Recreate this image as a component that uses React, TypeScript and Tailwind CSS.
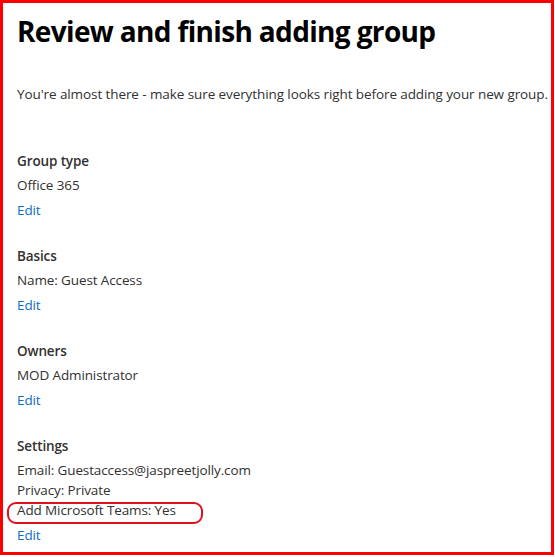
export default function App() {
  const sections = [
    { title: 'Group type', lines: ['Office 365'] },
    { title: 'Basics', lines: ['Name: Guest Access'] },
    { title: 'Owners', lines: ['MOD Administrator'] },
    {
      title: 'Settings',
      lines: ['Email: Guestaccess@jaspreetjolly.com', 'Privacy: Private', 'Add Microsoft Teams: Yes'],
    },
  ];

  return (
    <div className="w-[554px] h-[555px] border-[3px] border-[#ff0000] bg-white pl-[14px] pt-[10px] font-['Open_Sans',sans-serif] text-[#323130]">
      <h1 className="text-[28px] leading-[36px] font-bold text-black tracking-[-0.65px]">
        Review and finish adding group
      </h1>
      <p className="mt-[35px] text-[13.5px] leading-[20px] tracking-[-0.09px] text-[#323130] whitespace-nowrap">
        You're almost there - make sure everything looks right before adding your new group.
      </p>

      <div className="mt-[47px] flex flex-col gap-[26px]">
        {sections.map((s) => (
          <div key={s.title} className="flex flex-col text-[13.5px] leading-[20px] tracking-[-0.12px]">
            <div className="font-semibold">{s.title}</div>
            <div className="mt-[4px] flex flex-col">
              {s.lines.map((line) => (
                <div key={line} className="relative">
                  {line}
                  {line.startsWith('Add Microsoft') && (
                    <div className="absolute left-[-10px] top-[2px] w-[196px] h-[22px] rounded-[9px] border-[2.5px] border-[#e0101e]" />
                  )}
                </div>
              ))}
            </div>
            <a className="mt-[5px] text-[#106ebe] cursor-pointer">Edit</a>
          </div>
        ))}
      </div>
    </div>
  );
}
